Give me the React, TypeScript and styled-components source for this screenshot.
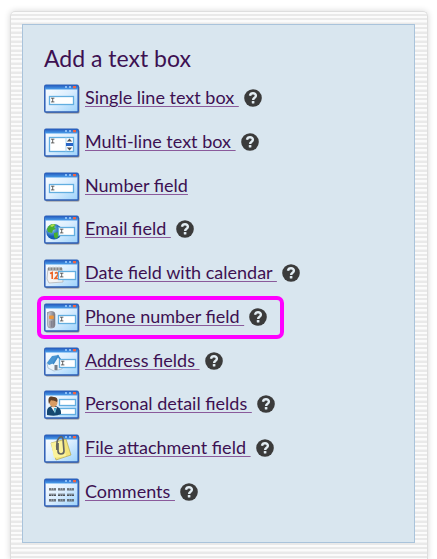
import React from "react";
import styled, { createGlobalStyle } from "styled-components";

const GlobalStyle = createGlobalStyle`
  *, *::before, *::after { box-sizing: border-box; }
  body {
    margin: 0;
    background: #fff;
    color: #3d1152;
    font-family: Lato, "Open Sans", sans-serif;
  }
`;

const Page = styled.main`
  padding: 11px 9px 0 10px;
`;

const stripes = [0, 4, 9, 13, 18, 22, 27, 31, 36]
  .map((y) => `#e9e9e9 ${y}px ${y + 2}px, #fbfbfb ${y + 2}px ${y + 4}px`)
  .join(", ");

const Frame = styled.div`
  min-height: calc(100vh - 11px);
  padding: 12px 12px 16px 11px;
  border: 1px solid #dedede;
  border-bottom: 0;
  border-radius: 5px 5px 0 0;
  background: linear-gradient(${stripes}) 0 2px / 100% 40px;
  box-shadow: 0 0 6px rgba(0, 0, 0, 0.16);
`;

const Panel = styled.section`
  padding: 17px 21px 34px;
  border: 1px solid #a9c3db;
  background: #d9e6ef;
`;

const Title = styled.h2`
  margin: 0;
  font-size: 23px;
  line-height: 32px;
  font-weight: 400;
`;

const FieldList = styled.ul`
  display: flex;
  flex-direction: column;
  align-items: flex-start;
  justify-content: space-between;
  min-height: 424px;
  margin: 10px 0 0;
  padding: 0;
  list-style: none;
`;

const FieldRow = styled.li<{ $highlighted?: boolean }>`
  position: relative;
  display: flex;
  align-items: center;
  height: 30px;
  ${(p) =>
    p.$highlighted &&
    `&::after {
      content: "";
      position: absolute;
      inset: -7px -17px -6px -7px;
      border: 4px solid #ff00ff;
      border-radius: 7px;
      pointer-events: none;
    }`}
`;

const FieldLink = styled.a`
  margin-left: 5px;
  padding-bottom: 4px;
  color: #3d1152;
  font-size: 18px;
  line-height: 24px;
  white-space: pre;
  text-decoration: underline 1px #8a5a9b;
  text-underline-offset: 2px;
`;

const HelpButton = styled.button`
  display: flex;
  margin: 0 0 0 5px;
  padding: 0 0 2px;
  border: 0;
  background: none;
  cursor: pointer;
`;

const WindowSvg = styled.svg`
  display: block;
  flex: none;
`;

function HelpIcon() {
  return (
    <svg width="18" height="18" viewBox="0 0 18 18" aria-hidden="true">
      <circle cx="9" cy="9" r="8.8" fill="#3b3b3b" />
      <path
        d="M6 6.7C6.3 5 7.4 4.3 9 4.3c1.8 0 2.9 1 2.9 2.4C11.9 8.8 9.1 8.6 9.1 10.9"
        fill="none"
        stroke="#e3edf3"
        strokeWidth="2.4"
      />
      <rect x="7.8" y="12" width="2.6" height="2.5" rx=".6" fill="#e3edf3" />
    </svg>
  );
}

function Box({ x, y, w, h = 8, cursor = false }: { x: number; y: number; w: number; h?: number; cursor?: boolean }) {
  return (
    <g>
      <rect x={x + 0.5} y={y + 0.5} width={w - 1} height={h - 1} fill="#fff" stroke="#62aee0" strokeWidth="1.3" />
      {cursor && <path d={`M${x + 2} ${y + 2.2}h3.4M${x + 3.7} ${y + 2}v4M${x + 2} ${y + 5.9}h3.4`} stroke="#555" strokeWidth=".9" />}
    </g>
  );
}

const art = {
  single: <Box x={5} y={12} w={25} h={9} cursor />,
  multi: (
    <g>
      <Box x={5} y={9} w={25} h={15} cursor />
      <path d="M22 9.5v14" stroke="#a9d3ef" />
      <rect x="22" y="15" width="7" height="3" fill="#2865c7" />
      <path d="M22.8 13.5 25.5 10.5 28.2 13.5zM22.8 19.5h5.4l-2.7 3z" fill="#555" />
    </g>
  ),
  email: (
    <g>
      <circle cx="10" cy="16.8" r="7.8" fill="url(#globe)" />
      <path d="M4 12c2-3 6-4 8-2l-2 2 2 2-3 1-1 3-4-1-1-3zM10 18l5-1 1 3-4 4-2-2z" fill="#49af32" />
      <path d="M6 11c2-2 4-2 5-1l-3 2z" fill="#b2df52" />
      <Box x={14} y={12} w={17} h={9} cursor />
    </g>
  ),
  date: (
    <g>
      <path d="M4 9h14l1 14-14 1-2-4z" fill="#f4f4f4" stroke="#aaa" strokeWidth=".7" />
      <path d="M4 8.5h14v3H4z" fill="#888" />
      <path d="M6 7v4M9 7v4M12 7v4M15 7v4" stroke="#ddd" strokeWidth=".8" />
      <path d="m6 14.5 2.2-1V20M11 14.5c2-2 4 .2 2.4 2L11 19.5h4" stroke="#ed6425" strokeWidth="1.6" fill="none" />
      <Box x={14} y={12} w={18} h={9} cursor />
    </g>
  ),
  phone: (
    <g>
      <path d="M4 9v3" stroke="#77757c" strokeWidth="1.3" />
      <rect x="3.5" y="8.5" width="7.5" height="16.5" rx="3" fill="url(#metal)" stroke="#85828b" strokeWidth=".6" />
      <rect x="5" y="12.5" width="4.8" height="3.6" rx=".8" fill="#ee963b" />
      <path d="M5 19h4.8M5 21h4.8M5.5 23h4M7.5 18v6" stroke="#777586" strokeWidth=".6" />
      <Box x={14} y={12} w={18} h={9} cursor />
    </g>
  ),
  address: (
    <g>
      <path d="m3 16 5-6 6-1 5 6-1 7-8 2-6-3z" fill="#edf5fb" stroke="#8ca8bd" strokeWidth=".6" />
      <path d="m3 16 5-7 7-1-5 8-5 2z" fill="#4896d3" />
      <path d="m9 17 5-8 6 9" fill="none" stroke="#3c8ac9" strokeWidth="1.5" />
      <rect x="10.5" y="18" width="3" height="5" fill="#777f89" />
      <Box x={15} y={12} w={17} h={9} cursor />
    </g>
  ),
  person: (
    <g>
      <Box x={15} y={9} w={17} h={7} />
      <Box x={15} y={18} w={17} h={7} />
      <path d="M3 25v-4q0-4 5-5h4q5 2 5 6v2q-5 3-14 1" fill="#16476f" />
      <path d="m7 17 4 6 2-6" fill="#eee" />
      <path d="m10 18 1 6 1-6" fill="#27a2c9" />
      <ellipse cx="9.5" cy="12.3" rx="4" ry="5" fill="#d79c63" />
      <path d="M5 14c-2-8 2-8 5-7 4 0 4 4 3 5-3-2-5-1-6-2z" fill="#614027" />
    </g>
  ),
  file: (
    <g>
      <path d="m7 9 15-4 5 16-15 5z" fill="#f3e47b" stroke="#aa9b45" strokeWidth=".6" />
      <path d="m7 9 12-2 3 15-12 2z" fill="#fbf29b" />
      <path d="M14 9v8q0 3 3 3t3-3L19 5q-1-4-4-1t-2 12" fill="none" stroke="#666660" strokeWidth="1.7" />
    </g>
  ),
  comments: (
    <g stroke="#4d5155" fill="none">
      <path d="M5 11.5h25M5 16.8h25M5 22.4h25" strokeWidth="2.6" strokeDasharray="7 2" opacity=".55" />
      <path d="M5 11h25M5 17.3h25M5 22h25" strokeWidth="1.2" strokeDasharray="2 1 1 1 2 2" />
    </g>
  ),
};

type Art = keyof typeof art;

function WindowIcon({ kind }: { kind: Art }) {
  return (
    <WindowSvg width="36" height="30" viewBox="0 0 36 30" aria-hidden="true">
      <defs>
        <linearGradient id="body" x1="0" y1="0" x2="1" y2="1">
          <stop stopColor="#fff" />
          <stop offset=".5" stopColor="#dceefe" />
          <stop offset="1" stopColor="#9bd2fb" />
        </linearGradient>
        <linearGradient id="bar" x1="0" y1="0" x2="0" y2="1">
          <stop stopColor="#2459bb" />
          <stop offset="1" stopColor="#4ca1ed" />
        </linearGradient>
        <radialGradient id="globe" cx=".35" cy=".3">
          <stop stopColor="#9bdcf9" />
          <stop offset="1" stopColor="#175db5" />
        </radialGradient>
        <linearGradient id="metal">
          <stop stopColor="#d4d4dc" />
          <stop offset="1" stopColor="#77767f" />
        </linearGradient>
      </defs>
      <rect x="1.5" y="2" width="34" height="27.4" rx="1.5" fill="#746f70" opacity=".75" />
      <rect x=".8" y="1.3" width="33.4" height="26.8" rx="1.2" fill="url(#body)" stroke="#2d5eb5" strokeWidth="1.5" />
      <rect x="1" y="1" width="33" height="4.5" fill="url(#bar)" />
      <path d="M21 3h2M25 3h2" stroke="#a4d2ff" strokeWidth="1.6" />
      <rect x="29" y="2" width="3" height="2.3" fill="#ef6544" />
      {art[kind]}
    </WindowSvg>
  );
}

interface Field {
  label: string;
  kind: Art;
  help?: boolean;
  highlighted?: boolean;
}

const fields: Field[] = [
  { label: "Single line text box", kind: "single", help: true },
  { label: "Multi-line text box", kind: "multi", help: true },
  { label: "Number field", kind: "single" },
  { label: "Email field", kind: "email", help: true },
  { label: "Date field with calendar", kind: "date", help: true },
  { label: "Phone number field", kind: "phone", help: true, highlighted: true },
  { label: "Address fields", kind: "address", help: true },
  { label: "Personal detail fields", kind: "person", help: true },
  { label: "File attachment field", kind: "file", help: true },
  { label: "Comments", kind: "comments", help: true },
];

export default function App() {
  return (
    <Page>
      <GlobalStyle />
      <Frame>
        <Panel>
          <Title>Add a text box</Title>
          <FieldList>
            {fields.map((f) => (
              <FieldRow key={f.label} $highlighted={f.highlighted}>
                <WindowIcon kind={f.kind} />
                <FieldLink href="#">{f.help ? f.label + " " : f.label}</FieldLink>
                {f.help && (
                  <HelpButton type="button" aria-label={`Help: ${f.label}`}>
                    <HelpIcon />
                  </HelpButton>
                )}
              </FieldRow>
            ))}
          </FieldList>
        </Panel>
      </Frame>
    </Page>
  );
}
